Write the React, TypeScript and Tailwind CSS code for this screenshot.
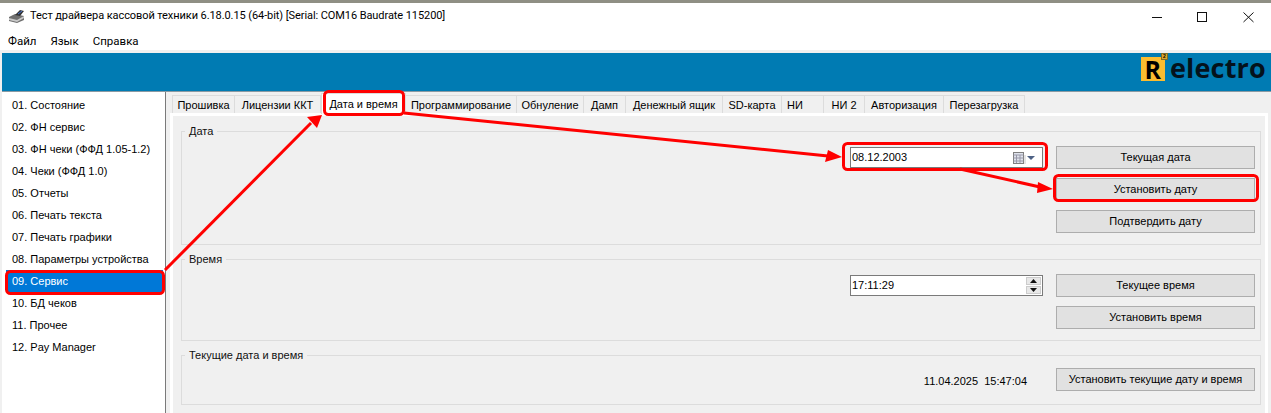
import React from "react";

const items = ["01. Состояние","02. ФН сервис","03. ФН чеки (ФФД 1.05-1.2)","04. Чеки (ФФД 1.0)","05. Отчеты","06. Печать текста","07. Печать графики","08. Параметры устройства","09. Сервис","10. БД чеков","11. Прочее","12. Pay Manager"];
const tabs: [string, number][] = [["Прошивка",63],["Лицензии ККТ",87],["Дата и время",0],["Программирование",112],["Обнуление",68],["Дамп",43],["Денежный ящик",98],["SD-карта",60],["НИ",43],["НИ 2",42],["Авторизация",80],["Перезагрузка",82]];

function Btn({ children }: { children: React.ReactNode }) {
  return <div className="w-[199px] h-[23px] shrink-0 bg-[#e1e1e1] border border-[#adadad] flex items-center justify-center">{children}</div>;
}

function Group({ title, h, children }: { title: string; h: string; children: React.ReactNode }) {
  return (
    <div className={"relative w-[1080px] border border-[#dcdcdc] pr-[5px] flex justify-end " + h}>
      <span className="absolute left-[3px] -top-[7px] px-[4px] bg-[#f0f0f0] leading-[13px] text-[#111]">{title}</span>
      {children}
    </div>
  );
}

export default function App() {
  return (
    <div className="relative w-[1271px] h-[413px] overflow-hidden bg-[#f0f0f0] text-black text-[11px] font-['Liberation_Sans',sans-serif]">
      <div className="h-[3px] bg-[#8f8f84]" />
      <div className="bg-white h-[27px] pl-[8px] flex items-center font-['Roboto',sans-serif] text-[11px] tracking-[-0.08px]">
        <svg width="18" height="14" viewBox="0 0 18 14" className="mr-[4px]">
          <path d="M1 7 L7 4 L16 6 L16 10 L9 13 L1 11 Z" fill="#6f6f6f" />
          <path d="M1 8 L9 10 L16 6 L16 8 L9 12 L1 10 Z" fill="#c9c9c9" />
          <path d="M7 5 L12 0 L16 1 L12 6 Z" fill="#333" />
          <path d="M10 4 L14 1" stroke="#4a78d8" strokeWidth="1" />
        </svg>
        <span>Тест драйвера кассовой техники 6.18.0.15 (64-bit) [Serial: COM16 Baudrate 115200]</span>
        <div className="ml-auto flex items-center">
          <svg width="46" height="12" viewBox="0 0 46 12"><path d="M1 6.5H11" stroke="#111" /></svg>
          <svg width="46" height="12" viewBox="0 0 46 12"><rect x="0.5" y="1.5" width="9" height="9" fill="none" stroke="#111" /></svg>
          <svg width="28" height="12" viewBox="0 0 28 12"><path d="M0.5 1.5L10.5 11M10.5 1.5L0.5 11" stroke="#111" /></svg>
        </div>
      </div>
      <div className="bg-white h-[20px] pl-[8px] pt-[3px] flex items-center gap-[14px] font-['Roboto',sans-serif] text-[11.5px]">
        <span>Файл</span><span>Язык</span><span>Справка</span>
      </div>
      <div className="bg-[#f0f0f0] h-[3px]" />
      <div className="h-[39px] w-[1269px] ml-[2px] bg-[#007bb3] border-b border-[#8a9aa3] flex items-start justify-end pr-[5px]">
        <div className="relative flex items-start h-[38px]">
          <div className="w-[24px] h-[24px] mt-[4px] bg-[#fbbc30] flex items-center justify-center text-[25px] leading-none font-bold font-['Open_Sans',sans-serif]">R</div>
          <div className="absolute left-[20px] top-0 w-[7px] h-[7px] bg-[#d9a52b] border border-[#7a6a2a] flex items-center justify-center text-[5px] leading-none font-bold">2</div>
          <span className="ml-[5px] text-[27px] leading-[30px] font-bold tracking-[0.2px] text-[#04121c] font-['Open_Sans',sans-serif]">electro</span>
        </div>
      </div>
      <div className="flex h-[321px]">
        <div className="ml-[2px] w-[164px] h-full bg-white border-r border-[#7a7a7a] pt-[2px] shrink-0">
          {items.map((t, i) => (
            <div key={t} className={i === 8 ? "h-[22px] pl-[6px] ml-[4px] mr-[2px] flex items-center bg-[#0078d7] text-white" : "h-[22px] pl-[10px] flex items-center"}>{t}</div>
          ))}
        </div>
        <div className="flex-1 min-w-0 pl-[4px] pt-[2px]">
          <div className="flex h-[19px] pl-[2px] items-end">
            {tabs.map(([t, w]) =>
              w === 0 ? (
                <div key={t} className="w-[85px] h-[21px] ml-[1px] -mr-px mb-[-1px] z-10 bg-white border border-b-0 border-[#dcdcdc] flex items-center justify-center">{t}</div>
              ) : t === "НИ" ? (
                <div key={t} style={{ width: w }} className="h-[18px] pt-[1px] pl-[5px] bg-[#f0f0f0] border border-b-0 border-[#dcdcdc] -mr-px flex items-center">{t}</div>
              ) : (
                <div key={t} style={{ width: w }} className="h-[18px] pt-[1px] bg-[#f0f0f0] border border-b-0 border-[#dcdcdc] -mr-px flex items-center justify-center">{t}</div>
              )
            )}
          </div>
          <div className="w-[1098px] h-[300px] bg-[#f0f0f0] border-[3px] border-white border-b-0 pl-[8px] pt-[15px] flex flex-col gap-[14px]">
            <Group title="Дата" h="h-[114px]">
              <div className="flex mt-[15px] mr-[13px]">
                <div className="w-[193px] h-[21px] bg-white border border-[#7a7a7a] flex items-center pl-[1px]">
                  <span>08.12.2003</span>
                  <svg width="28" height="14" viewBox="0 0 28 14" className="ml-auto mr-[2px]">
                    <rect x="1.5" y="1.5" width="10" height="11" fill="#dfe3ec" stroke="#7f7f7f" />
                    <path d="M1.5 4H11.5M4.5 4V12M8 4V12M1.5 7H11.5M1.5 10H11.5" stroke="#99a" strokeWidth="1" />
                    <path d="M13 13H13V4" stroke="#ccc" />
                    <path d="M15 5H23L19 9Z" fill="#4d6185" />
                  </svg>
                </div>
              </div>
              <div className="flex flex-col gap-[9px] mt-[14px]">
                <Btn>Текущая дата</Btn><Btn>Установить дату</Btn><Btn>Подтвердить дату</Btn>
              </div>
            </Group>
            <Group title="Время" h="h-[82px]">
              <div className="flex mt-[15px] mr-[13px]">
                <div className="w-[193px] h-[21px] bg-white border border-[#7a7a7a] flex items-center pl-[1px]">
                  <span>17:11:29</span>
                  <div className="ml-auto flex flex-col gap-[1px] mr-[1px]">
                    <div className="w-[15px] h-[8px] bg-[#e8e8e8] border border-[#ccc] flex items-center justify-center"><svg width="7" height="4" viewBox="0 0 7 4"><path d="M0 4L3.5 0L7 4Z" fill="#111" /></svg></div>
                    <div className="w-[15px] h-[8px] bg-[#e8e8e8] border border-[#ccc] flex items-center justify-center"><svg width="7" height="4" viewBox="0 0 7 4"><path d="M0 0L3.5 4L7 0Z" fill="#111" /></svg></div>
                  </div>
                </div>
              </div>
              <div className="flex flex-col gap-[9px] mt-[14px]">
                <Btn>Текущее время</Btn><Btn>Установить время</Btn>
              </div>
            </Group>
            <Group title="Текущие дата и время" h="h-[50px]">
              <span className="mt-[17px] mr-[29px]">11.04.2025&nbsp;&nbsp;15:47:04</span>
              <div className="mt-[12px]"><Btn>Установить текущие дату и время</Btn></div>
            </Group>
          </div>
        </div>
      </div>
      <svg className="absolute inset-0 z-20 pointer-events-none" width="1271" height="413" viewBox="0 0 1271 413" fill="none">
        <g stroke="#ff0000" strokeWidth="3">
          <rect x="6.5" y="271.5" width="157" height="22" rx="4" />
          <rect x="324.5" y="91.5" width="79" height="23" rx="4" />
          <rect x="843.5" y="143.5" width="203" height="26" rx="4" />
          <rect x="1054.5" y="175.5" width="203" height="25" rx="4" />
          <path d="M165 270L311 123" />
          <path d="M404 113L828 156" />
          <path d="M960 169L1040 187" />
        </g>
        <path d="M322 115L307 117L317 128Z" fill="#ff0000" />
        <path d="M842 157L828 150L825 162Z" fill="#ff0000" />
        <path d="M1053 189L1038 182L1037 193Z" fill="#ff0000" />
      </svg>
    </div>
  );
}
